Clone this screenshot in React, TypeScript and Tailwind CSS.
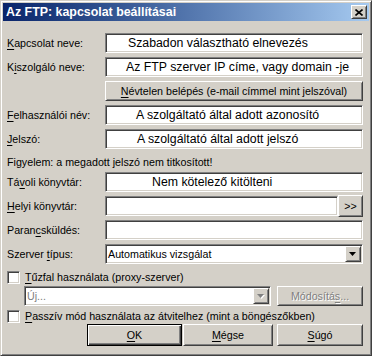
import React from 'react';

const sunken =
  'border border-t-[#808080] border-l-[#808080] border-r-white border-b-white shadow-[inset_1px_1px_0_#404040,inset_-1px_-1px_0_#d4d0c8]';
const raised =
  'border border-t-white border-l-white border-r-[#404040] border-b-[#404040] shadow-[inset_1px_1px_0_#d4d0c8,inset_-1px_-1px_0_#808080]';

const U = ({ children }: { children: React.ReactNode }) => (
  <span className="underline underline-offset-[2px]">{children}</span>
);

interface FieldRowProps {
  label: React.ReactNode;
  value?: string;
  pad?: string;
  className?: string;
}

const FieldRow: React.FC<FieldRowProps> = ({ label, value, pad = 'pl-[3px]', className = '' }) => (
  <div className={`flex items-center h-5 ${className}`}>
    <div className="w-[98px] shrink-0">{label}</div>
    <div className={`flex-1 h-5 bg-white flex items-center text-[12.3px] whitespace-nowrap overflow-hidden ${pad} ${sunken}`}>
      {value}
    </div>
  </div>
);

const DropArrow = ({ disabled = false }: { disabled?: boolean }) => (
  <svg width="8" height="5" viewBox="0 0 8 5">
    {disabled && <polygon points="1,1 8,1 4.5,5" fill="#ffffff" />}
    <polygon points="0,0 7,0 3.5,4" fill={disabled ? '#808080' : '#000000'} />
  </svg>
);

export default function App() {
  return (
    <div className="w-[372px] h-[356px] bg-[#d4d0c8] p-[2px] border border-t-[#d4d0c8] border-l-[#d4d0c8] border-r-[#404040] border-b-[#404040] shadow-[inset_1px_1px_0_#ffffff,inset_-1px_-1px_0_#808080] font-['Liberation_Sans',Arial,sans-serif] text-[10.7px] text-black leading-none select-none">
      {/* Title bar */}
      <div className="h-[18px] flex items-center justify-between bg-linear-to-r from-[#0a246a] to-[#a6caf0] pl-[3px] pr-[2px]">
        <span className="text-white font-bold text-[12.4px]">Az FTP: kapcsolat beállításai</span>
        <div className={`w-4 h-[14px] bg-[#d4d0c8] flex items-center justify-center ${raised}`}>
          <svg width="8" height="7" viewBox="0 0 8 7">
            <path d="M0.5 0.5 L7.5 6.5 M7.5 0.5 L0.5 6.5" stroke="#000" strokeWidth="1.6" />
          </svg>
        </div>
      </div>

      {/* Content */}
      <div className="flex flex-col pl-[4px] pr-[6px]">
        <FieldRow
          className="mt-[12px]"
          label={<><U>K</U>apcsolat neve:</>}
          value="Szabadon választható elnevezés"
          pad="pl-[22px]"
        />
        <FieldRow
          className="mt-[4px]"
          label={<>K<U>i</U>szolgáló neve:</>}
          value="Az FTP szerver IP címe, vagy domain -je"
          pad="pl-[20px]"
        />
        <div className="flex items-center h-5 mt-[4px]">
          <div className="w-[98px] shrink-0" />
          <button className={`flex-1 h-5 bg-[#d4d0c8] flex items-center justify-center ${raised}`}>
            <U>N</U>évtelen belépés (e-mail címmel mint jelszóval)
          </button>
        </div>
        <FieldRow
          className="mt-[4px]"
          label={<><U>F</U>elhasználói név:</>}
          value="A szolgáltató által adott azonosító"
          pad="pl-[30px]"
        />
        <FieldRow
          className="mt-[4px]"
          label={<><U>J</U>elszó:</>}
          value="A szolgáltató által adott jelszó"
          pad="pl-[31px]"
        />
        <div className="h-[19px] mt-[4px] flex items-center">
          Figyelem: a megadott jelszó nem titkosított!
        </div>
        <FieldRow
          label={<>Tá<U>v</U>oli könyvtár:</>}
          value="Nem kötelező kitölteni"
          pad="pl-[46px]"
        />
        <div className="flex items-center h-5 mt-[4px]">
          <div className="w-[98px] shrink-0">
            <U>H</U>elyi könyvtár:
          </div>
          <div className={`w-[233px] h-5 bg-white ${sunken}`} />
          <button className={`ml-auto w-[25px] h-[22px] bg-[#d4d0c8] flex items-center justify-center ${raised}`}>
            &gt;&gt;
          </button>
        </div>
        <FieldRow className="mt-[4px]" label={<>Paran<U>c</U>sküldés:</>} />
        <div className="flex items-center h-5 mt-[4px]">
          <div className="w-[98px] shrink-0">
            Szerver <U>t</U>ípus:
          </div>
          <div className={`flex-1 h-5 bg-white flex items-center pl-[2px] pr-[1px] ${sunken}`}>
            <span className="flex-1">Automatikus vizsgálat</span>
            <div className={`w-4 h-4 bg-[#d4d0c8] flex items-center justify-center ${raised}`}>
              <DropArrow />
            </div>
          </div>
        </div>

        {/* Firewall */}
        <div className="flex items-center h-[18px] mt-[4px]">
          <div className={`w-[13px] h-[13px] bg-white ${sunken}`} />
          <span className="ml-[5px]">
            <U>T</U>űzfal használata (proxy-szerver)
          </span>
        </div>
        <div className="flex items-center h-5">
          <div className={`ml-[17px] w-[247px] h-5 bg-white flex items-center pl-[2px] pr-[1px] ${sunken}`}>
            <span className="flex-1 text-[#808080] [text-shadow:1px_1px_0_#ffffff]">Új...</span>
            <div className={`w-4 h-4 bg-[#d4d0c8] flex items-center justify-center ${raised}`}>
              <DropArrow disabled />
            </div>
          </div>
          <button
            className={`ml-auto w-[86px] h-5 bg-[#d4d0c8] flex items-center justify-center text-[#808080] [text-shadow:1px_1px_0_#ffffff] ${raised}`}
          >
            Módosítá<U>s</U>...
          </button>
        </div>
        <div className="flex items-center h-[18px] mt-[1px]">
          <div className={`w-[13px] h-[13px] bg-white ${sunken}`} />
          <span className="ml-[5px]">
            <U>P</U>asszív mód használata az átvitelhez (mint a böngészőkben)
          </span>
        </div>

        {/* Buttons */}
        <div className="flex items-center h-[22px] -mt-[1px]">
          <button className="ml-[80px] w-[95px] h-[22px] bg-[#d4d0c8] flex items-center justify-center border border-black shadow-[inset_1px_1px_0_#ffffff,inset_-1px_-1px_0_#404040,inset_-2px_-2px_0_#808080]">
            <U>O</U>K
          </button>
          <button className={`ml-[1px] w-[90px] h-[22px] bg-[#d4d0c8] flex items-center justify-center ${raised}`}>
            <U>M</U>égse
          </button>
          <button className={`ml-auto w-[86px] h-[22px] bg-[#d4d0c8] flex items-center justify-center ${raised}`}>
            <U>S</U>úgó
          </button>
        </div>
      </div>
    </div>
  );
}
